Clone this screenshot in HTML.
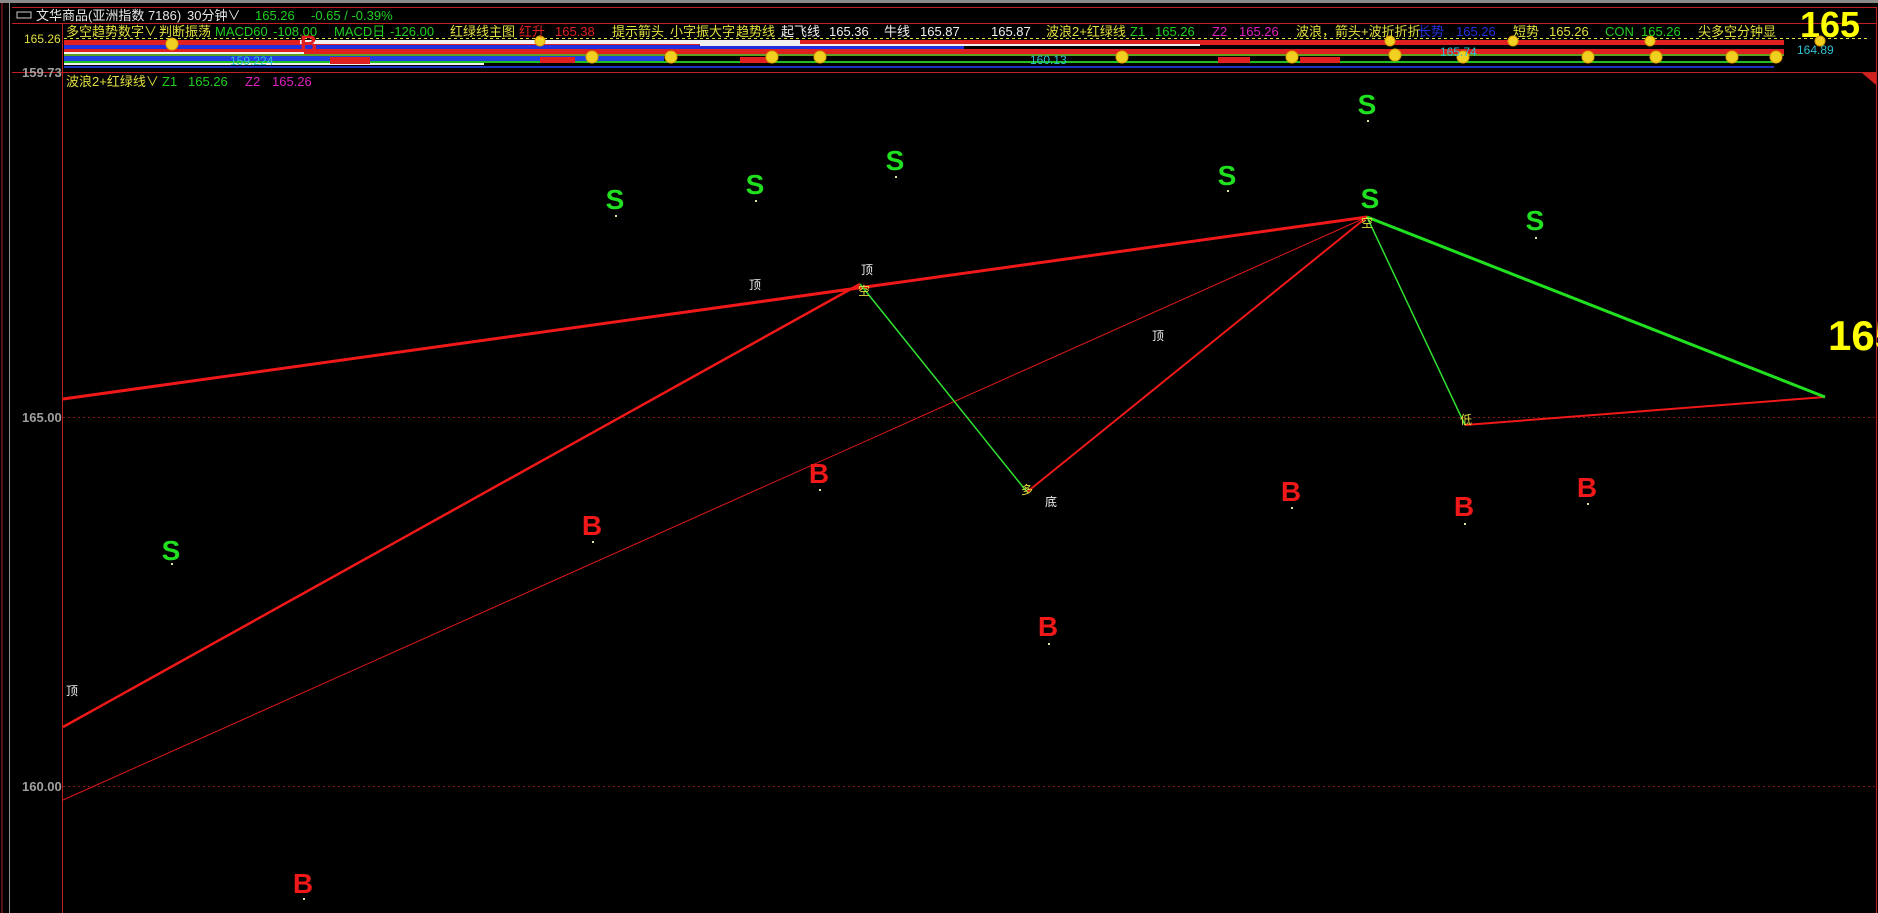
<!DOCTYPE html>
<html><head><meta charset="utf-8"><style>
html,body{margin:0;padding:0;background:#000;width:1878px;height:913px;overflow:hidden}
svg{display:block}
text{font-family:"Liberation Sans","Noto Sans CJK SC",sans-serif}
.c{font-size:13px}
.big{font-size:28px;font-weight:bold}
</style></head><body>
<svg width="1878" height="913" viewBox="0 0 1878 913" xmlns="http://www.w3.org/2000/svg">
<rect width="1878" height="913" fill="#000"/>
<rect x="0" y="0" width="1878" height="3" fill="#8a8a8a"/>
<line x1="2" y1="3" x2="2" y2="913" stroke="#b02020"/>
<line x1="9.5" y1="3" x2="9.5" y2="913" stroke="#909090"/>
<line x1="62.5" y1="24" x2="62.5" y2="913" stroke="#c02020"/>
<line x1="1876.5" y1="7" x2="1876.5" y2="913" stroke="#c02020"/>
<line x1="12" y1="7.5" x2="1876" y2="7.5" stroke="#c02020"/>
<line x1="12" y1="23.5" x2="1876" y2="23.5" stroke="#c02020"/>
<rect x="17" y="12" width="14" height="6" fill="none" stroke="#ccc"/>
<text x="36" y="20" class="c" fill="#e8e8e8">文华商品(亚洲指数 7186)</text>
<text x="187" y="20" class="c" fill="#e8e8e8">30分钟∨</text>
<text x="255" y="20" class="c" fill="#20d020">165.26</text>
<text x="311" y="20" class="c" fill="#20d020">-0.65 / -0.39%</text>
<text x="1800" y="37" font-size="36" font-weight="bold" fill="#ffff00">165</text>
<line x1="64" y1="38.5" x2="1870" y2="38.5" stroke="#e0e040" stroke-dasharray="3,3"/>
<rect x="64" y="40" width="1720" height="5" fill="#e02020"/>
<rect x="64" y="45" width="900" height="4" fill="#2030e0"/>
<rect x="300" y="40" width="500" height="4" fill="#f0f0f0"/>
<rect x="700" y="44" width="500" height="2" fill="#f0f0f0"/>
<rect x="64" y="49" width="1720" height="5" fill="#e02020"/>
<rect x="64" y="52" width="240" height="4" fill="#f0f0f0"/>
<rect x="64" y="54" width="1720" height="2" fill="#60a020"/>
<rect x="64" y="56" width="600" height="5" fill="#2040e0"/>
<rect x="64" y="61" width="420" height="4" fill="#f0f0f0"/>
<rect x="64" y="61" width="1710" height="2" fill="#20c020"/>
<rect x="64" y="66" width="1710" height="2" fill="#2030c0"/>
<rect x="330" y="57" width="40" height="7" fill="#e02020"/>
<rect x="540" y="57" width="35" height="6" fill="#e02020"/>
<rect x="740" y="57" width="30" height="6" fill="#e02020"/>
<rect x="1218" y="57" width="32" height="6" fill="#e02020"/>
<rect x="1300" y="57" width="40" height="6" fill="#e02020"/>
<line x1="12" y1="72.5" x2="1876" y2="72.5" stroke="#c02020"/>
<g fill="#f0d020" stroke="#e0a000">
<circle cx="172" cy="44" r="6"/><circle cx="592" cy="57" r="6"/><circle cx="671" cy="57" r="6"/><circle cx="772" cy="57" r="6"/><circle cx="820" cy="57" r="6"/>
<circle cx="1122" cy="57" r="6"/><circle cx="1292" cy="57" r="6"/><circle cx="1395" cy="55" r="6"/><circle cx="1463" cy="57" r="6"/><circle cx="1588" cy="57" r="6"/><circle cx="1656" cy="57" r="6"/><circle cx="1732" cy="57" r="6"/><circle cx="1776" cy="57" r="6"/>
<circle cx="540" cy="41" r="5"/><circle cx="1390" cy="41" r="5"/><circle cx="1513" cy="41" r="5"/><circle cx="1650" cy="41" r="5"/><circle cx="1820" cy="41" r="5"/>
</g>
<text x="300" y="52" font-size="24" font-weight="bold" fill="#e02020">B</text>
<text x="230" y="65" font-size="12" fill="#30c0d0">159.224</text>
<text x="1030" y="64" font-size="12" fill="#30c0d0">160.13</text>
<text x="1440" y="56" font-size="12" fill="#30c0d0">165.74</text>
<text x="1797" y="54" font-size="12" fill="#30c0d0">164.89</text>
<text x="24" y="43" font-size="12" fill="#e0e040">165.26</text>
<text x="22" y="77" font-size="13" font-weight="bold" fill="#a0a0a0">159.73</text>
<g class="c">
<text x="66" y="36" fill="#e0e040">多空趋势数字∨</text>
<text x="159" y="36" fill="#e0e040">判断振荡</text>
<text x="215" y="36" fill="#20d020">MACD60</text>
<text x="273" y="36" fill="#20d020">-108.00</text>
<text x="334" y="36" fill="#20d020">MACD日</text>
<text x="390" y="36" fill="#20d020">-126.00</text>
<text x="450" y="36" fill="#e0e040">红绿线主图</text>
<text x="519" y="36" fill="#e02020">红升</text>
<text x="555" y="36" fill="#e02020">165.38</text>
<text x="612" y="36" fill="#e0e040">提示箭头</text>
<text x="670" y="36" fill="#e0e040">小字振大字</text>
<text x="736" y="36" fill="#e0e040">趋势线</text>
<text x="781" y="36" fill="#f0f0f0">起飞线</text>
<text x="829" y="36" fill="#f0f0f0">165.36</text>
<text x="884" y="36" fill="#f0f0f0">牛线</text>
<text x="920" y="36" fill="#f0f0f0">165.87</text>
<text x="991" y="36" fill="#f0f0f0">165.87</text>
<text x="1046" y="36" fill="#e0e040">波浪2+红绿线</text>
<text x="1130" y="36" fill="#20d020">Z1</text>
<text x="1155" y="36" fill="#20d020">165.26</text>
<text x="1212" y="36" fill="#e020c0">Z2</text>
<text x="1239" y="36" fill="#e020c0">165.26</text>
<text x="1296" y="36" fill="#e0e040">波浪，箭头+波折折折</text>
<text x="1418" y="36" fill="#2030e0">长势</text>
<text x="1456" y="36" fill="#2030e0">165.26</text>
<text x="1513" y="36" fill="#e0e040">短势</text>
<text x="1549" y="36" fill="#e0e040">165.26</text>
<text x="1605" y="36" fill="#20d020">CON</text>
<text x="1641" y="36" fill="#20d020">165.26</text>
<text x="1698" y="36" fill="#e0e040">尖多空分钟显</text>
<text x="66" y="86" fill="#e0e040">波浪2+红绿线∨</text>
<text x="162" y="86" fill="#20d020">Z1</text>
<text x="188" y="86" fill="#20d020">165.26</text>
<text x="245" y="86" fill="#e020c0">Z2</text>
<text x="272" y="86" fill="#e020c0">165.26</text>
</g>
<polygon points="1862,73 1876,73 1876,85" fill="#d02020"/>
<line x1="63" y1="417.5" x2="1875" y2="417.5" stroke="#801818" stroke-dasharray="2,3"/>
<line x1="63" y1="786.5" x2="1875" y2="786.5" stroke="#801818" stroke-dasharray="2,3"/>
<text x="22" y="422" font-size="13" font-weight="bold" fill="#a0a0a0">165.00</text>
<text x="22" y="791" font-size="13" font-weight="bold" fill="#a0a0a0">160.00</text>
<line x1="63" y1="399" x2="1367" y2="217" stroke="#f01818" stroke-width="3"/>
<line x1="63" y1="727" x2="860" y2="284" stroke="#f01818" stroke-width="2.5"/>
<line x1="63" y1="800" x2="1367" y2="217" stroke="#e01818" stroke-width="1"/>
<line x1="860" y1="284" x2="1027" y2="492" stroke="#30e030" stroke-width="1.5"/>
<line x1="1027" y1="492" x2="1367" y2="217" stroke="#f01818" stroke-width="2"/>
<line x1="1367" y1="217" x2="1465" y2="425" stroke="#30e030" stroke-width="1.5"/>
<line x1="1465" y1="425" x2="1825" y2="397" stroke="#f01818" stroke-width="2"/>
<line x1="1367" y1="217" x2="1825" y2="397" stroke="#20e020" stroke-width="3"/>
<text x="1828" y="350" font-size="42" font-weight="bold" fill="#ffff00">165</text>
<g class="big" text-anchor="middle" fill="#20e020">
<text x="615" y="209">S</text><text x="755" y="194">S</text><text x="895" y="170">S</text><text x="1227" y="185">S</text><text x="1367" y="114">S</text><text x="1370" y="208">S</text><text x="1535" y="230">S</text><text x="171" y="560">S</text>
</g>
<g class="big" text-anchor="middle" fill="#f01818">
<text x="592" y="535">B</text><text x="819" y="483">B</text><text x="1048" y="636">B</text><text x="1291" y="501">B</text><text x="1464" y="516">B</text><text x="1587" y="497">B</text><text x="303" y="893">B</text>
</g>
<g fill="#e0e0a0">
<rect x="615" y="215" width="2" height="2"/><rect x="755" y="200" width="2" height="2"/><rect x="895" y="176" width="2" height="2"/><rect x="1227" y="190" width="2" height="2"/><rect x="1367" y="120" width="2" height="2"/><rect x="1535" y="237" width="2" height="2"/><rect x="171" y="563" width="2" height="2"/>
<rect x="592" y="541" width="2" height="2"/><rect x="819" y="489" width="2" height="2"/><rect x="1048" y="643" width="2" height="2"/><rect x="1291" y="507" width="2" height="2"/><rect x="1464" y="523" width="2" height="2"/><rect x="1587" y="503" width="2" height="2"/><rect x="303" y="898" width="2" height="2"/>
</g>
<g font-size="12" fill="#f0f0f0">
<text x="749" y="289">顶</text><text x="861" y="274">顶</text><text x="1152" y="340">顶</text><text x="66" y="695">顶</text><text x="1045" y="506">底</text>
</g>
<g font-size="12" fill="#e0e040">
<text x="858" y="295">空</text><text x="1361" y="227">空</text><text x="1021" y="494">多</text><text x="1460" y="424">低</text>
</g>
</svg>
</body></html>
